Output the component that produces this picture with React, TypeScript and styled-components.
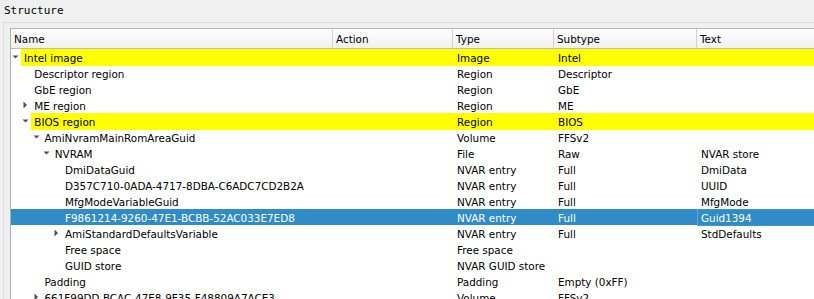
import React from 'react';
import styled, { createGlobalStyle, css } from 'styled-components';

const GlobalStyle = createGlobalStyle`
  html, body {
    margin: 0;
    padding: 0;
    background: #f0f0f0;
    overflow: hidden;
  }
`;

const COLUMNS = '322px 120px 101px 143px 1fr';
const INDENT = 10.25;

const Page = styled.div`
  width: 814px;
  height: 299px;
  overflow: hidden;
  background: #f0f0f0;
  font-family: 'DejaVu Sans', 'Liberation Sans', sans-serif;
  font-size: 10.4px;
  color: #000;
`;

const GroupTitle = styled.div`
  height: 22px;
  padding-left: 4px;
  font-family: 'DejaVu Sans Mono', 'Liberation Mono', monospace;
  font-size: 11px;
  line-height: 22px;
  box-sizing: border-box;
  padding-top: 0;
  margin-top: 0;
  position: relative;
  top: -0.5px;
`;

const GroupFrame = styled.div`
  margin-left: 3px;
  width: 840px;
  border-top: 1px solid #dcdcdc;
  border-left: 1px solid #dcdcdc;
  padding: 5px 0 0 6px;
`;

const Tree = styled.div`
  background: #fff;
  border-top: 1px solid #b9b9b9;
  border-left: 1px solid #adadad;
`;

const HeaderRow = styled.div`
  display: grid;
  grid-template-columns: ${COLUMNS};
  height: 19px;
  background: linear-gradient(#fefefe, #f1f1f1);
  border-bottom: 1px solid #bdbdbd;
`;

const HeaderCell = styled.div`
  padding: 2px 0 0 3px;
  line-height: 17px;
  border-right: 1px solid #d2d2d2;
  white-space: nowrap;
  &:last-child {
    border-right: none;
  }
`;

const Row = styled.div<{ $selected?: boolean }>`
  display: grid;
  grid-template-columns: ${COLUMNS};
  height: 16px;
  line-height: 16px;
  white-space: nowrap;
  ${(p) =>
    p.$selected &&
    css`
      background: #308cc6;
      color: #fff;
    `}
`;

const NameCell = styled.div`
  display: flex;
  min-width: 0;
`;

const Branch = styled.div<{ $depth: number }>`
  flex: none;
  width: ${(p) => 10 + p.$depth * INDENT}px;
  display: flex;
  justify-content: flex-end;
`;

const Label = styled.div<{ $marked?: boolean }>`
  flex: 1;
  padding: 1px 0 0 3px;
  box-sizing: border-box;
  overflow: hidden;
  ${(p) => p.$marked && 'background: #ffff00;'}
`;

const Cell = styled.div<{ $marked?: boolean; $focus?: boolean }>`
  padding: 1px 0 0 4px;
  box-sizing: border-box;
  overflow: hidden;
  ${(p) => p.$marked && 'background: #ffff00;'}
  ${(p) => p.$focus && 'box-shadow: inset 1px 0 0 #5fa8d8, inset 0 1px 0 #3d95cc, inset 0 -1px 0 #3d95cc;'}
`;

const Arrow = styled.svg`
  width: 10px;
  height: 16px;
  flex: none;
`;

type Expander = 'open' | 'closed' | undefined;

const Expand: React.FC<{ state: Expander }> = ({ state }) => (
  <Arrow viewBox="0 0 10 16">
    {state === 'open' && <polygon points="1.5,6.5 7.5,6.5 4.5,9.5" fill="#505050" />}
    {state === 'closed' && <polygon points="2.5,4.5 6,8 2.5,11.5" fill="#505050" />}
  </Arrow>
);

interface Item {
  name: string;
  depth: number;
  expander?: Expander;
  type: string;
  subtype?: string;
  text?: string;
  marked?: boolean;
  selected?: boolean;
}

const items: Item[] = [
  { name: 'Intel image', depth: 0, expander: 'open', type: 'Image', subtype: 'Intel', marked: true },
  { name: 'Descriptor region', depth: 1, type: 'Region', subtype: 'Descriptor' },
  { name: 'GbE region', depth: 1, type: 'Region', subtype: 'GbE' },
  { name: 'ME region', depth: 1, expander: 'closed', type: 'Region', subtype: 'ME' },
  { name: 'BIOS region', depth: 1, expander: 'open', type: 'Region', subtype: 'BIOS', marked: true },
  { name: 'AmiNvramMainRomAreaGuid', depth: 2, expander: 'open', type: 'Volume', subtype: 'FFSv2' },
  { name: 'NVRAM', depth: 3, expander: 'open', type: 'File', subtype: 'Raw', text: 'NVAR store' },
  { name: 'DmiDataGuid', depth: 4, type: 'NVAR entry', subtype: 'Full', text: 'DmiData' },
  { name: 'D357C710-0ADA-4717-8DBA-C6ADC7CD2B2A', depth: 4, type: 'NVAR entry', subtype: 'Full', text: 'UUID' },
  { name: 'MfgModeVariableGuid', depth: 4, type: 'NVAR entry', subtype: 'Full', text: 'MfgMode' },
  { name: 'F9861214-9260-47E1-BCBB-52AC033E7ED8', depth: 4, type: 'NVAR entry', subtype: 'Full', text: 'Guid1394', selected: true },
  { name: 'AmiStandardDefaultsVariable', depth: 4, expander: 'closed', type: 'NVAR entry', subtype: 'Full', text: 'StdDefaults' },
  { name: 'Free space', depth: 4, type: 'Free space' },
  { name: 'GUID store', depth: 4, type: 'NVAR GUID store' },
  { name: 'Padding', depth: 2, type: 'Padding', subtype: 'Empty (0xFF)' },
  { name: '661F99DD-BCAC-47E8-9F35-F48809A7ACE3', depth: 2, expander: 'closed', type: 'Volume', subtype: 'FFSv2' },
];

export default function App() {
  return (
    <Page>
      <GlobalStyle />
      <GroupTitle>Structure</GroupTitle>
      <GroupFrame>
        <Tree>
          <HeaderRow>
            <HeaderCell>Name</HeaderCell>
            <HeaderCell>Action</HeaderCell>
            <HeaderCell>Type</HeaderCell>
            <HeaderCell>Subtype</HeaderCell>
            <HeaderCell>Text</HeaderCell>
          </HeaderRow>
          {items.map((it) => (
            <Row key={it.name} $selected={it.selected}>
              <NameCell>
                <Branch $depth={it.depth}>
                  <Expand state={it.expander} />
                </Branch>
                <Label $marked={it.marked}>{it.name}</Label>
              </NameCell>
              <Cell $marked={it.marked} />
              <Cell $marked={it.marked}>{it.type}</Cell>
              <Cell $marked={it.marked}>{it.subtype}</Cell>
              <Cell $marked={it.marked} $focus={it.selected}>{it.text}</Cell>
            </Row>
          ))}
        </Tree>
      </GroupFrame>
    </Page>
  );
}
